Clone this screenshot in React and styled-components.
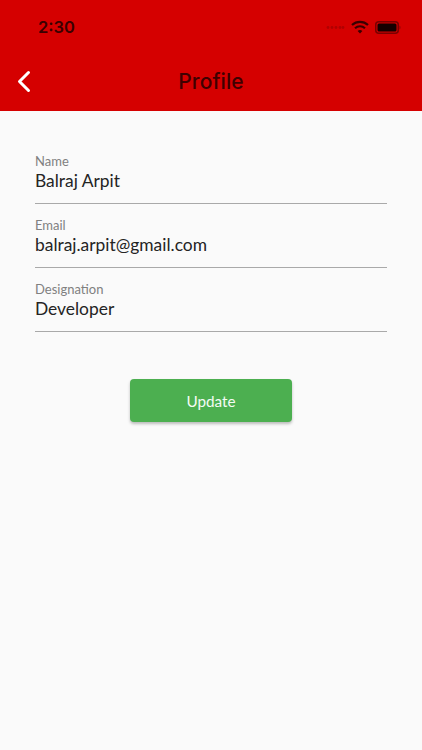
import React from 'react';
import styled, {createGlobalStyle} from 'styled-components';

const GlobalStyle = createGlobalStyle`
  html, body {
    margin: 0;
    padding: 0;
    background: #fafafa;
  }
`;

const Screen = styled.div`
  width: 422px;
  height: 750px;
  overflow: hidden;
  background: #fafafa;
  font-family: Lato, "Liberation Sans", sans-serif;
`;

const Header = styled.header`
  height: 111px;
  background: #d50000;
  display: flex;
  flex-direction: column;
`;

const StatusBar = styled.div`
  height: 54px;
  display: flex;
  align-items: center;
  justify-content: space-between;
  padding: 0 21px 0 38px;
  box-sizing: border-box;
`;

const Clock = styled.span`
  font-family: Inter, Roboto, sans-serif;
  font-size: 16.5px;
  font-weight: 600;
  color: #3a0000;
`;

const StatusIcons = styled.div`
  display: flex;
  align-items: center;
  gap: 6px;
`;

const NavBar = styled.div`
  position: relative;
  height: 57px;
  display: flex;
  align-items: center;
  justify-content: center;
`;

const BackButton = styled.div`
  position: absolute;
  left: 16px;
  top: 15px;
  display: flex;
`;

const Title = styled.h1`
  margin: 0 0 3px;
  font-family: Inter, Roboto, sans-serif;
  font-size: 21px;
  font-weight: 500;
  letter-spacing: 0.1px;
  color: #3f0000;
`;

const Form = styled.main`
  padding: 42px 35px 0;
  display: flex;
  flex-direction: column;
`;

const Field = styled.div`
  height: 64px;
  display: flex;
  flex-direction: column;
`;

const Label = styled.label`
  font-size: 13px;
  line-height: 16px;
  color: #808080;
`;

const Value = styled.div`
  font-size: 17.4px;
  line-height: 24px;
  color: #242424;
  padding-bottom: 10px;
  border-bottom: 1.5px solid #a9a9a9;
`;

const Actions = styled.div`
  display: flex;
  justify-content: center;
  padding-top: 34px;
`;

const UpdateButton = styled.button`
  width: 162px;
  height: 43px;
  border: 0;
  border-radius: 4px;
  background: #4caf50;
  color: #f4fbf4;
  font-family: Lato, "Liberation Sans", sans-serif;
  font-size: 15.3px;
  box-shadow: 0 2px 3px rgba(0, 0, 0, 0.25);
`;

const fields = [
  {label: 'Name', value: 'Balraj Arpit'},
  {label: 'Email', value: 'balraj.arpit@gmail.com'},
  {label: 'Designation', value: 'Developer'},
];

const Signal = () => <svg width="19" height="5" viewBox="0 0 19 5">
  {[2, 6, 10, 14, 17].map(x => <circle key={x} cx={x} cy="2.5" r="1.4" fill="#b00000" />)}
</svg>;

const Wifi = () => <svg width="18" height="14" viewBox="0 0 18 14" fill="none" stroke="#3a0000" strokeWidth="2.2">
  <path d="M1 5 C5.5 .8 12.5 .8 17 5" />
  <path d="M4 8.2 C6.8 5.6 11.2 5.6 14 8.2" />
  <path d="M9 13.5 L6.6 11 C8 9.8 10 9.8 11.4 11 Z" fill="#3a0000" stroke="none" />
</svg>;

const Battery = () => <svg width="26" height="13" viewBox="0 0 26 13">
  <rect x="0.75" y="0.75" width="22.5" height="11.5" rx="3" fill="none" stroke="#7a0000" strokeWidth="1.5" />
  <rect x="2.5" y="2.5" width="19" height="8" rx="1.5" fill="#140000" />
  <path d="M24.5 4.5 C25.8 5 25.8 8 24.5 8.5 Z" fill="#8a0000" />
</svg>;

const Chevron = () => <svg width="16" height="24" viewBox="0 0 16 24" fill="none" stroke="#fff" strokeWidth="3" strokeLinecap="round" strokeLinejoin="round">
  <path d="M12.5 3.5 L3.5 12.5 L12.5 21.5" />
</svg>;

export default function App() {
  return <Screen>
    <GlobalStyle />
    <Header>
      <StatusBar>
        <Clock>2:30</Clock>
        <StatusIcons>
          <Signal />
          <Wifi />
          <Battery />
        </StatusIcons>
      </StatusBar>
      <NavBar>
        <BackButton><Chevron /></BackButton>
        <Title>Profile</Title>
      </NavBar>
    </Header>
    <Form>
      {fields.map(f => <Field key={f.label}>
        <Label>{f.label}</Label>
        <Value>{f.value}</Value>
      </Field>)}
      <Actions>
        <UpdateButton>Update</UpdateButton>
      </Actions>
    </Form>
  </Screen>;
}
